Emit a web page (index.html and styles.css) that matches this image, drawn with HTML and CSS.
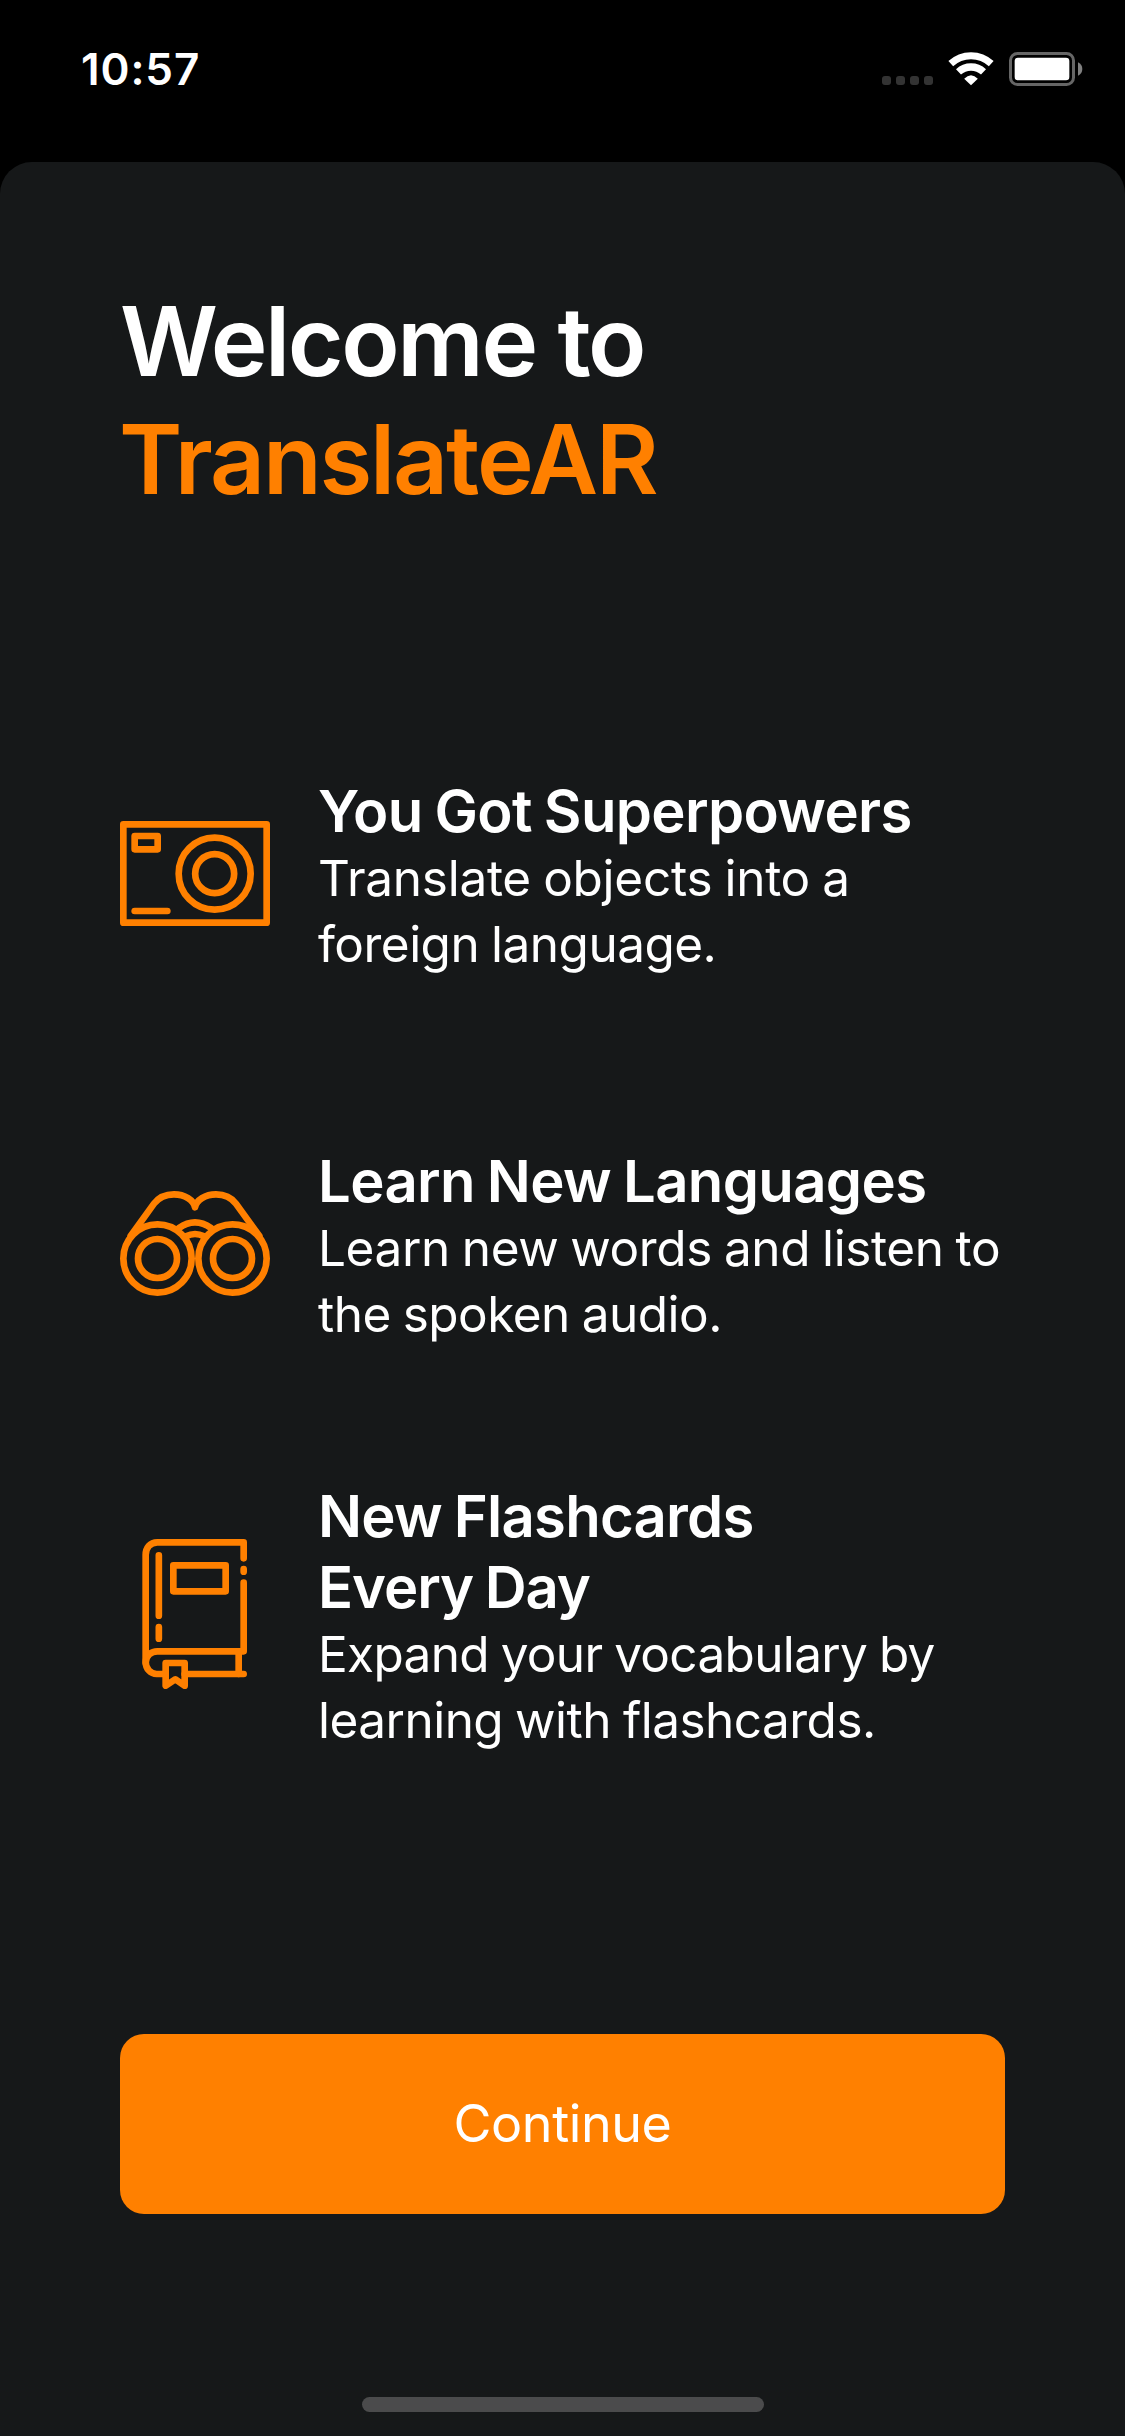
FILE: index.html
```html
<!DOCTYPE html>
<html lang="en">
<head>
<meta charset="utf-8">
<title>TranslateAR</title>
<link rel="stylesheet" href="styles.css">
</head>
<body>
<header class="status">
  <span class="time">10:57</span>
  <div class="indicators">
    <div class="cellular"><i></i><i></i><i></i><i></i></div>
    <svg class="wifi" viewBox="264 65 138 102" fill="none" stroke="#fff">
      <path stroke-width="21" d="M272.3 99.9A89 89 0 0 1 393.7 99.9"/>
      <path stroke-width="22" d="M295.5 124.8A55 55 0 0 1 370.5 124.8"/>
      <path fill="#fff" stroke="none" d="M333 165L312.5 145Q333 124 353.5 145Z"/>
    </svg>
    <svg class="battery" viewBox="447 66 222 102">
      <rect x="451.5" y="70.5" width="189" height="93" rx="21" fill="none" stroke="#666" stroke-width="9"/>
      <rect x="464" y="83" width="164" height="68" rx="10" fill="#fff"/>
      <path fill="#808080" d="M654 97Q667 103 667 117Q667 131 654 137Z"/>
    </svg>
  </div>
</header>
<main class="sheet">
  <h1 class="title"><span class="welcome">Welcome to</span><span class="brand">TranslateAR</span></h1>
  <section class="features">
    <article class="feature">
      <svg class="icon" viewBox="30 -3 450 450">
        <rect x="40" y="73" width="430" height="295"/>
        <rect x="74" y="108" width="69" height="40"/>
        <circle cx="314" cy="221" r="108"/>
        <circle cx="314" cy="221" r="58.5"/>
        <path d="M74 333H172"/>
      </svg>
      <div class="copy">
        <h2 class="heading wide">You Got Superpowers</h2>
        <p class="body"><span class="line loose">Translate objects into a</span><span class="line">foreign language.</span></p>
      </div>
    </article>
    <article class="feature">
      <svg class="icon" viewBox="30 -3 450 450">
        <circle cx="142.5" cy="265.5" r="102.5"/>
        <circle cx="142.5" cy="265.5" r="58.5"/>
        <circle cx="367.5" cy="265.5" r="102.5"/>
        <circle cx="367.5" cy="265.5" r="58.5"/>
        <path d="M62 198L132 101Q153 73 192 73C224 73 251 90 255 112C259 90 286 73 318 73Q357 73 378 101L448 198"/>
        <path d="M207 174Q255 140 303 174M228 199Q255 185 282 199"/>
      </svg>
      <div class="copy">
        <h2 class="heading wide">Learn New Languages</h2>
        <p class="body"><span class="line even">Learn new words and listen to</span><span class="line">the spoken audio.</span></p>
      </div>
    </article>
    <article class="feature">
      <svg class="icon" viewBox="0 57 450 450">
        <path d="M371 115V67H112C90 67 77 84 77 105V425C77 447 92 462 110 462H137M194 462H371"/>
        <path d="M371 188V394H112C95 394 77 406 77 428M356 394V462"/>
        <path d="M371 147V155M116.500 106V287M116.500 321V356"/>
        <rect x="160" y="136" width="157" height="78"/>
        <path d="M137 429H194V497L166 478L137 497Z"/>
      </svg>
      <div class="copy">
        <h2 class="heading"><span class="line">New Flashcards</span><span class="line tight">Every Day</span></h2>
        <p class="body"><span class="line snug">Expand your vocabulary by</span><span class="line">learning with flashcards.</span></p>
      </div>
    </article>
  </section>
  <button class="continue">Continue</button>
  <div class="home-indicator"></div>
</main>
</body>
</html>
```
FILE: styles.css
```css
* { box-sizing: border-box; margin: 0; padding: 0; }

body {
  width: 1125px;
  height: 2436px;
  display: flex;
  flex-direction: column;
  overflow: hidden;
  background: #000;
  color: #fff;
  font-family: Inter, "Liberation Sans", sans-serif;
}

.status {
  height: 162px;
  display: flex;
  justify-content: space-between;
  align-items: flex-start;
  padding: 42px 42px 0 81px;
}
.time {
  font-size: 44px;
  font-weight: 600;
  line-height: 54px;
  letter-spacing: 0.9px;
}
.indicators {
  display: flex;
  align-items: flex-end;
  padding-top: 10px;
}
.cellular { display: flex; gap: 5px; margin: 0 15px 1px 0; }
.cellular i { width: 9px; height: 9px; border-radius: 3px; background: #333; }
.wifi { width: 46px; height: 34px; margin-right: 15px; }
.battery { width: 74px; height: 34px; }

.sheet {
  flex: 1;
  display: flex;
  flex-direction: column;
  padding: 120px 120px 0;
  border-radius: 32px 32px 0 0;
  background: #161819;
}

.title {
  display: flex;
  flex-direction: column;
  font-size: 96px;
  font-weight: 600;
  line-height: 118px;
}
.welcome { letter-spacing: -2.4px; }
.brand { letter-spacing: -2.13px; margin-left: -1px; color: #ff8000; }

.features { display: flex; flex-direction: column; margin-top: 253px; }
.feature { display: flex; align-items: center; gap: 48px; margin-bottom: 164px; }
.feature:nth-child(2) { margin-bottom: 128px; }
.feature:last-child { margin-bottom: 0; }
.icon {
  width: 150px;
  height: 150px;
  flex: none;
  fill: none;
  stroke: #ff8000;
  stroke-width: 20;
  stroke-linecap: round;
  stroke-linejoin: round;
}
.copy { padding-top: 5px; white-space: nowrap; }
.feature:last-child .copy { padding-top: 6px; }
.line { display: block; }
.heading {
  font-size: 58px;
  font-weight: 600;
  line-height: 71px;
  letter-spacing: -0.75px;
  word-spacing: -2px;
  margin-bottom: -2px;
}
.wide { letter-spacing: -0.64px; }
.body {
  font-size: 49.5px;
  font-weight: 400;
  line-height: 66px;
  letter-spacing: -0.52px;
  word-spacing: -1.5px;
}
.loose { letter-spacing: -0.26px; }
.even { letter-spacing: -0.4px; }
.snug { letter-spacing: -0.67px; }
.tight { letter-spacing: -1.07px; }

.continue {
  height: 180px;
  margin-top: 281px;
  border: 0;
  border-radius: 24px;
  background: #ff8000;
  color: #fff;
  font: 400 52px/64px Inter, "Liberation Sans", sans-serif;
  letter-spacing: -0.4px;
}

.home-indicator {
  width: 402px;
  height: 15px;
  margin: 183px auto 0;
  border-radius: 8px;
  background: #4b4b4c;
}
```
